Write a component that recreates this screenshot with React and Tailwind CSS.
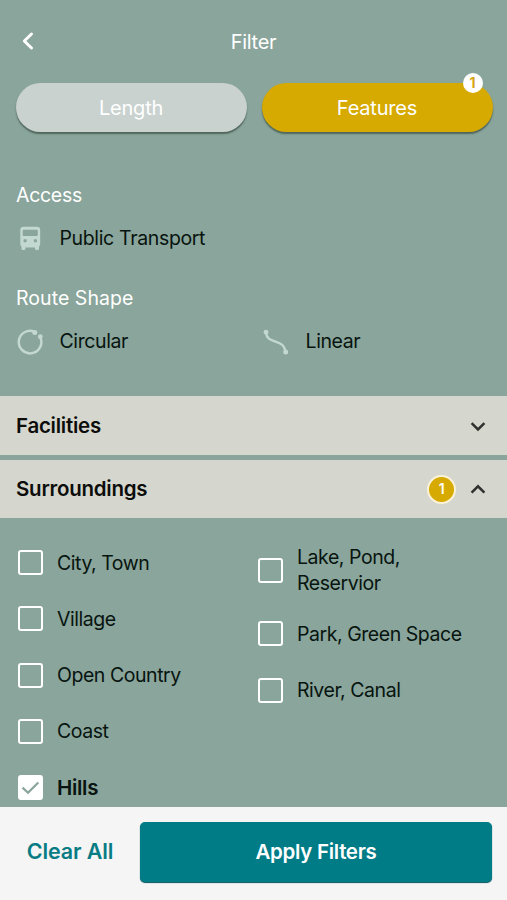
import { useState } from "react";

const leftColumn = ["City, Town", "Village", "Open Country", "Coast", "Hills"];
const rightColumn = ["Lake, Pond, Reservior", "Park, Green Space", "River, Canal"];

const BusIcon = () => (
  <svg width="30" height="30" viewBox="0 0 30 30" fill="none" className="-ml-px">
    <path
      fillRule="evenodd"
      fill="currentColor"
      d="M8.5 2.8H22a3.2 3.2 0 0 1 3.2 3.2V20a3.4 3.4 0 0 1-1.2 2.6V24.600a1.500 1.500 0 0 1-1.500 1.500h-1a1.500 1.500 0 0 1-1.500-1.500V23.400H10.500V24.600a1.500 1.500 0 0 1-1.500 1.500H8a1.500 1.500 0 0 1-1.500-1.500V22.600A3.400 3.400 0 0 1 5.300 20V6a3.200 3.200 0 0 1 3.200-3.200ZM8.700 5.800a1 1 0 0 0-1 1V11a1 1 0 0 0 1 1H21.800a1 1 0 0 0 1-1V6.800a1 1 0 0 0-1-1ZM10.100 15.100a1.700 1.700 0 1 0 0 3.400a1.700 1.700 0 1 0 0-3.400ZM20.400 15.100a1.700 1.700 0 1 0 0 3.400a1.700 1.700 0 1 0 0-3.400Z"
    />
  </svg>
);

const CircularIcon = () => (
  <svg width="30" height="30" viewBox="0 0 30 30" fill="none" className="-ml-px">
    <path
      d="M19.500 4.700A11.300 11.300 0 1 0 25.600 11"
      stroke="currentColor"
      strokeWidth="2.5"
      strokeLinecap="round"
    />
    <circle cx="19.8" cy="5.5" r="2.5" fill="currentColor" />
    <circle cx="25.3" cy="9.7" r="2.4" fill="currentColor" />
  </svg>
);

const LinearIcon = () => (
  <svg width="30" height="30" viewBox="0 0 30 30" fill="none" className="-ml-px">
    <path
      d="M5 5.3C5.5 11.5 9 12.8 14.5 14.7S23.5 18 24.7 25"
      stroke="currentColor"
      strokeWidth="2.4"
      strokeLinecap="round"
    />
    <circle cx="5" cy="5.2" r="2.4" fill="currentColor" />
    <circle cx="24.7" cy="25" r="2.5" fill="currentColor" />
  </svg>
);

const Chevron = ({ up }) => (
  <svg width="18" height="18" viewBox="0 0 18 18" fill="none" className="mr-[20px]">
    <path
      d={up ? "M2.6 12.6L9 6.3L15.4 12.6" : "M2.6 6.2L9 12.5L15.4 6.2"}
      stroke="#30312e"
      strokeWidth="2.5"
    />
  </svg>
);

const Checkbox = ({ label, checked, onChange }) => (
  <button
    onClick={onChange}
    className="flex min-h-[37px] w-full cursor-pointer items-center text-left"
  >
    <span
      className={`flex h-[25px] w-[25px] shrink-0 items-center justify-center rounded-[3px] border-2 border-white ${
        checked ? "bg-white" : ""
      }`}
    >
      {checked && (
        <svg width="19" height="15" viewBox="0 0 19 15" fill="none" className="shrink-0">
          <path d="M1.5 7.6L7 12.7L17.3 2.5" stroke="#8aa59b" strokeWidth="2.2" />
        </svg>
      )}
    </span>
    <span
      className={`ml-[14px] w-[170px] text-[19.5px] leading-[26px] ${
        checked ? "text-[20.5px] font-semibold tracking-[-0.3px]" : "tracking-[-0.45px]"
      }`}
    >
      {label}
    </span>
  </button>
);

const App = () => {
  const [selected, setSelected] = useState(["Hills"]);

  const toggle = (item) => {
    setSelected(
      selected.includes(item)
        ? selected.filter((s) => s !== item)
        : [...selected, item]
    );
  };

  const renderColumn = (items) => (
    <div className="flex flex-col gap-[19.25px]">
      {items.map((item) => (
        <Checkbox
          key={item}
          label={item}
          checked={selected.includes(item)}
          onChange={() => toggle(item)}
        />
      ))}
    </div>
  );

  return (
    <div className="flex h-[900px] w-[507px] flex-col overflow-hidden bg-[#8aa59b] font-['Inter','Liberation_Sans',sans-serif] text-[19.5px] tracking-[-0.3px] text-[#07140f]">
      <main className="flex h-[807px] shrink-0 flex-col overflow-hidden">
        <header className="grid h-[83px] shrink-0 grid-cols-3 items-center px-4 text-white">
          <button className="flex cursor-pointer pb-[2px]">
            <svg width="24" height="24" viewBox="0 0 24 24" fill="none">
              <path
                d="M15.5 5L8.3 12L15.5 19"
                stroke="white"
                strokeWidth="3"
                strokeLinecap="round"
                strokeLinejoin="round"
              />
            </svg>
          </button>
          <h1 className="text-center text-[20px]">Filter</h1>
        </header>

        <div className="flex h-[49px] shrink-0 gap-[15px] pl-[15.5px] text-[20px] tracking-[-0.2px] text-white">
          <button className="w-[231px] cursor-pointer rounded-full bg-[#c9d2cf] pt-px shadow-[0_2px_1.5px_rgba(40,60,50,0.6)]">
            Length
          </button>
          <button className="relative w-[231px] cursor-pointer rounded-full bg-[#d6aa00] pt-px shadow-[0_2px_1.5px_rgba(40,60,50,0.6)]">
            Features
            <span className="absolute -top-[10px] right-[10px] flex h-5 w-5 items-center justify-center rounded-full bg-white text-sm font-bold text-[#d6a51a]">
              {selected.length}
            </span>
          </button>
        </div>

        <section className="mt-[50px] px-4">
          <h2 className="leading-[27px] text-white">Access</h2>
          <div className="mt-[15px] flex h-[30px] items-center text-[#c3d8d0]">
            <BusIcon />
            <span className="ml-[14.5px] tracking-[-0.35px] text-[#07140f]">
              Public Transport
            </span>
          </div>
        </section>

        <section className="mt-[31px] px-4">
          <h2 className="leading-[27px] tracking-[0.05px] text-white">Route Shape</h2>
          <div className="mt-[15px] grid h-[30px] grid-cols-[245.5px_1fr] tracking-[-0.4px] text-[#c3d8d0]">
            <div className="flex items-center">
              <CircularIcon />
              <span className="ml-[14.5px] text-[#07140f]">Circular</span>
            </div>
            <div className="flex items-center">
              <LinearIcon />
              <span className="ml-[15px] text-[#07140f]">Linear</span>
            </div>
          </div>
        </section>

        <button className="mt-[39px] flex h-[59px] shrink-0 cursor-pointer items-center bg-[#d5d6cd] pl-4 text-[20.5px] font-semibold tracking-[-0.25px] text-[#0c0d0b]">
          <span className="flex-1 pt-px text-left">Facilities</span>
          <Chevron />
        </button>
        <button className="mt-[5px] flex h-[58px] shrink-0 cursor-pointer items-center bg-[#d5d6cd] pl-4 text-[20.5px] font-semibold tracking-[-0.25px] text-[#0c0d0b]">
          <span className="flex-1 pt-px text-left">Surroundings</span>
          <span className="mr-[13px] flex h-[29px] w-[29px] items-center justify-center rounded-full border-2 border-[#fbf2d8] bg-[#d6aa00] text-sm text-white">
            {selected.length}
          </span>
          <Chevron up />
        </button>

        <div className="mt-[26px] grid grid-cols-[240px_1fr] pl-[18px]">
          {renderColumn(leftColumn)}
          {renderColumn(rightColumn)}
        </div>
      </main>

      <footer className="flex h-[93px] shrink-0 bg-[#f5f5f5] pt-[15px] pr-[15px] text-[21.5px] font-semibold">
        <button className="h-[59px] w-[140px] cursor-pointer tracking-[-0.1px] text-[#087c84]">
          Clear All
        </button>
        <button className="h-[60px] flex-1 cursor-pointer rounded-[5px] bg-[#007c87] text-[20.5px] text-white shadow-[0_1px_1px_#05505a]">
          Apply Filters
        </button>
      </footer>
    </div>
  );
};

export default App;
